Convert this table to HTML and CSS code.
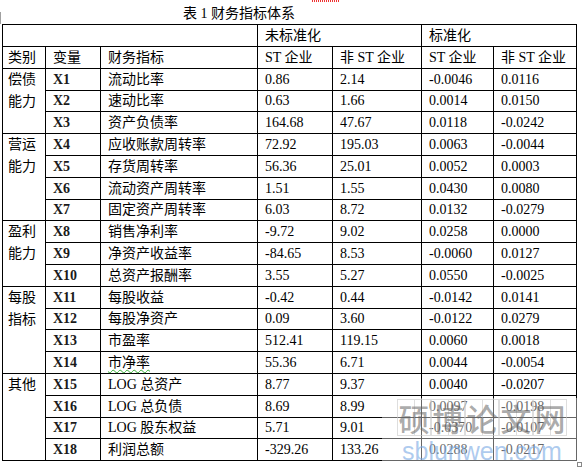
FILE: index.html
```html
<!DOCTYPE html>
<html lang="zh-CN">
<head>
<meta charset="utf-8">
<title>表 1 财务指标体系</title>
<link rel="stylesheet" href="styles.css">
</head>
<body>
<div class="page">
  <span class="squiggle"></span>
  <span class="corner"></span>
  <h1 class="title">表 1 财务指标体系</h1>
  <div class="grid">
    <div class="c span3"></div>
    <div class="c span2">未标准化</div>
    <div class="c span2">标准化</div>

    <div class="c cat">类别</div>
    <div class="c">变量</div>
    <div class="c">财务指标</div>
    <div class="c">ST 企业</div>
    <div class="c">非 ST 企业</div>
    <div class="c">ST 企业</div>
    <div class="c">非 ST 企业</div>

    <div class="c cat r3">偿债<br>能力</div>
    <div class="c var">X1</div><div class="c">流动比率</div><div class="c">0.86</div><div class="c">2.14</div><div class="c">-0.0046</div><div class="c">0.0116</div>
    <div class="c var">X2</div><div class="c">速动比率</div><div class="c">0.63</div><div class="c">1.66</div><div class="c">0.0014</div><div class="c">0.0150</div>
    <div class="c var">X3</div><div class="c">资产负债率</div><div class="c">164.68</div><div class="c">47.67</div><div class="c">0.0118</div><div class="c">-0.0242</div>

    <div class="c cat r4">营运<br>能力</div>
    <div class="c var">X4</div><div class="c">应收账款周转率</div><div class="c">72.92</div><div class="c">195.03</div><div class="c">0.0063</div><div class="c">-0.0044</div>
    <div class="c var">X5</div><div class="c">存货周转率</div><div class="c">56.36</div><div class="c">25.01</div><div class="c">0.0052</div><div class="c">0.0003</div>
    <div class="c var">X6</div><div class="c">流动资产周转率</div><div class="c">1.51</div><div class="c">1.55</div><div class="c">0.0430</div><div class="c">0.0080</div>
    <div class="c var">X7</div><div class="c">固定资产周转率</div><div class="c">6.03</div><div class="c">8.72</div><div class="c">0.0132</div><div class="c">-0.0279</div>

    <div class="c cat r3">盈利<br>能力</div>
    <div class="c var">X8</div><div class="c">销售净利率</div><div class="c">-9.72</div><div class="c">9.02</div><div class="c">0.0258</div><div class="c">0.0000</div>
    <div class="c var">X9</div><div class="c">净资产收益率</div><div class="c">-84.65</div><div class="c">8.53</div><div class="c">-0.0060</div><div class="c">0.0127</div>
    <div class="c var">X10</div><div class="c">总资产报酬率</div><div class="c">3.55</div><div class="c">5.27</div><div class="c">0.0550</div><div class="c">-0.0025</div>

    <div class="c cat r4">每股<br>指标</div>
    <div class="c var">X11</div><div class="c">每股收益</div><div class="c">-0.42</div><div class="c">0.44</div><div class="c">-0.0142</div><div class="c">0.0141</div>
    <div class="c var">X12</div><div class="c">每股净资产</div><div class="c">0.09</div><div class="c">3.60</div><div class="c">-0.0122</div><div class="c">0.0279</div>
    <div class="c var">X13</div><div class="c">市盈率</div><div class="c">512.41</div><div class="c">119.15</div><div class="c">0.0060</div><div class="c">0.0018</div>
    <div class="c var">X14</div><div class="c"><span class="wavy">市净率</span></div><div class="c">55.36</div><div class="c">6.71</div><div class="c">0.0044</div><div class="c">-0.0054</div>

    <div class="c cat r4">其他</div>
    <div class="c var">X15</div><div class="c">LOG 总资产</div><div class="c">8.77</div><div class="c">9.37</div><div class="c">0.0040</div><div class="c">-0.0207</div>
    <div class="c var">X16</div><div class="c">LOG 总负债</div><div class="c">8.69</div><div class="c">8.99</div><div class="c">0.0097</div><div class="c">-0.0198</div>
    <div class="c var">X17</div><div class="c">LOG 股东权益</div><div class="c">5.71</div><div class="c">9.01</div><div class="c">-0.0370</div><div class="c">-0.0107</div>
    <div class="c var">X18</div><div class="c">利润总额</div><div class="c">-329.26</div><div class="c">133.26</div><div class="c">0.0288</div><div class="c">-0.0217</div>
  </div>
  <div class="wm">
    <div class="wm-boxes"><span>硕</span><span>博</span><span>论</span><span>文</span><span>网</span></div>
    <div class="wm-url">sblunwen.com</div>
  </div>
  <span class="endmark"></span>
</div>
</body>
</html>
```
FILE: styles.css
```css
body {
  margin: 0;
  background: #fff;
  color: #000;
  font-family: "Liberation Serif", "Noto Sans CJK SC", serif;
  font-size: 14px;
}
.page {
  position: relative;
  width: 585px;
  height: 471px;
  overflow: hidden;
}
.squiggle {
  position: absolute;
  left: 312px;
  top: 0;
  width: 27px;
  height: 2px;
  background: repeating-linear-gradient(90deg, #e33 0 1px, transparent 1px 2px);
}
.corner {
  position: absolute;
  left: 0;
  top: 12px;
  width: 1px;
  height: 12px;
  background: #a0a0a0;
}
.title {
  margin: 0;
  height: 24px;
  box-sizing: border-box;
  padding: 4px 0 0 183px;
  font-size: 14px;
  font-weight: normal;
  line-height: 20px;
}
.grid {
  margin-left: 2px;
  display: grid;
  width: max-content;
  grid-template-columns: 42px 54px 156px 74px 88px 71px 82px;
  grid-template-rows: 21px 21px 21px 20px 21px 21px 21px 21px 20px 21px 21px 21px 21px 20px 21px 21px 21px 21px 20px 21px;
  gap: 1px;
  background: #000;
  border: 1px solid #000;
}
.c {
  background: #fff;
  padding-left: 7px;
  display: flex;
  align-items: center;
  white-space: nowrap;
  line-height: 20px;
}
.cat {
  padding-left: 5px;
  align-items: flex-start;
  line-height: 22px;
}
.span3 { grid-column: span 3; }
.span2 { grid-column: span 2; }
.r3 { grid-row: span 3; }
.r4 { grid-row: span 4; }
.var { font-weight: bold; color: #1a1a1a; }
.wavy {
  text-decoration: underline wavy #3a3;
  text-decoration-thickness: 1px;
  text-underline-offset: 2px;
}
.wm {
  position: absolute;
  left: 382px;
  top: 398px;
  width: 196px;
  height: 63px;
  background: rgba(255, 255, 255, 0.4);
}
.wm-boxes {
  display: flex;
  margin: 1px 0 0 15px;
}
.wm-boxes span {
  width: 34px;
  height: 37px;
  box-sizing: border-box;
  border: 1px solid rgba(200, 200, 200, 0.6);
  background: linear-gradient(rgba(200, 200, 200, 0.6), rgba(200, 200, 200, 0.6)) center / 1px 100% no-repeat;
  font-family: "Noto Sans CJK SC", sans-serif;
  font-size: 31px;
  font-weight: 500;
  line-height: 35px;
  text-align: center;
  color: rgba(100, 100, 100, 0.55);
}
.wm-url {
  position: absolute;
  left: 20px;
  top: 41px;
  font-family: "Liberation Sans", sans-serif;
  font-size: 25px;
  line-height: 25px;
  color: rgba(120, 168, 228, 0.6);
}
.endmark {
  position: absolute;
  left: 577px;
  top: 462px;
  width: 5px;
  height: 5px;
  box-sizing: border-box;
  border: 1px solid #888;
}
```
